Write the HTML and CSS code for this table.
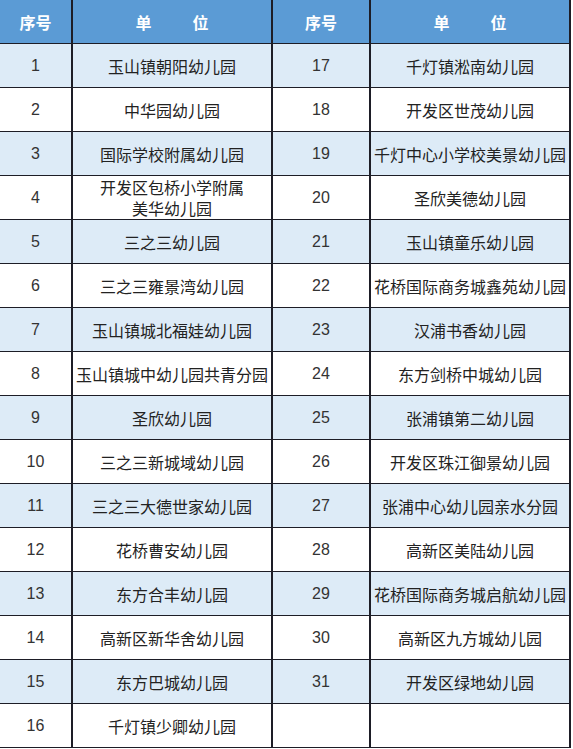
FILE: index.html
```html
<!DOCTYPE html>
<html lang="zh-CN">
<head>
<meta charset="utf-8">
<title>幼儿园名单</title>
<link rel="stylesheet" href="styles.css">
</head>
<body>
<table class="list">
  <colgroup>
    <col class="c-no"><col class="c-name"><col class="c-no2"><col class="c-name">
  </colgroup>
  <thead>
    <tr class="head">
      <th class="no">序号</th>
      <th><span class="h1">单</span><span>位</span></th>
      <th class="no">序号</th>
      <th><span class="h1">单</span><span>位</span></th>
    </tr>
  </thead>
  <tbody>
    <tr class="alt"><td class="num">1</td><td>玉山镇朝阳幼儿园</td><td class="num">17</td><td>千灯镇淞南幼儿园</td></tr>
    <tr><td class="num">2</td><td>中华园幼儿园</td><td class="num">18</td><td>开发区世茂幼儿园</td></tr>
    <tr class="alt"><td class="num">3</td><td>国际学校附属幼儿园</td><td class="num">19</td><td>千灯中心小学校美景幼儿园</td></tr>
    <tr><td class="num">4</td><td class="two"><div class="ln">开发区包桥小学附属</div><div class="ln">美华幼儿园</div></td><td class="num">20</td><td>圣欣美德幼儿园</td></tr>
    <tr class="alt"><td class="num">5</td><td>三之三幼儿园</td><td class="num">21</td><td>玉山镇童乐幼儿园</td></tr>
    <tr><td class="num">6</td><td>三之三雍景湾幼儿园</td><td class="num">22</td><td>花桥国际商务城鑫苑幼儿园</td></tr>
    <tr class="alt"><td class="num">7</td><td>玉山镇城北福娃幼儿园</td><td class="num">23</td><td>汉浦书香幼儿园</td></tr>
    <tr><td class="num">8</td><td>玉山镇城中幼儿园共青分园</td><td class="num">24</td><td>东方剑桥中城幼儿园</td></tr>
    <tr class="alt"><td class="num">9</td><td>圣欣幼儿园</td><td class="num">25</td><td>张浦镇第二幼儿园</td></tr>
    <tr><td class="num">10</td><td>三之三新城域幼儿园</td><td class="num">26</td><td>开发区珠江御景幼儿园</td></tr>
    <tr class="alt"><td class="num">11</td><td>三之三大德世家幼儿园</td><td class="num">27</td><td>张浦中心幼儿园亲水分园</td></tr>
    <tr><td class="num">12</td><td>花桥曹安幼儿园</td><td class="num">28</td><td>高新区美陆幼儿园</td></tr>
    <tr class="alt"><td class="num">13</td><td>东方合丰幼儿园</td><td class="num">29</td><td>花桥国际商务城启航幼儿园</td></tr>
    <tr><td class="num">14</td><td>高新区新华舍幼儿园</td><td class="num">30</td><td>高新区九方城幼儿园</td></tr>
    <tr class="alt"><td class="num">15</td><td>东方巴城幼儿园</td><td class="num">31</td><td>开发区绿地幼儿园</td></tr>
    <tr><td class="num">16</td><td>千灯镇少卿幼儿园</td><td class="num"></td><td></td></tr>
  </tbody>
</table>
</body>
</html>
```
FILE: styles.css
```css
html, body {
  margin: 0;
  padding: 0;
  background: #ffffff;
}

.list {
  border-collapse: collapse;
  table-layout: fixed;
  width: 571px;
  font-family: "Noto Sans CJK SC", "Noto Sans", sans-serif;
  font-size: 16px;
  color: #222222;
}

.c-no { width: 72px; }
.c-name { width: 200px; }
.c-no2 { width: 98px; }

.list th,
.list td {
  height: 43px;
  padding: 0;
  text-align: center;
  vertical-align: middle;
  white-space: nowrap;
  border-top: 1px solid #1d1d26;
  border-bottom: 1px solid #1d1d26;
  border-left: 2px solid #1d1d26;
  border-right: 2px solid #1d1d26;
  line-height: 20px;
}

.list tr > :first-child {
  border-left: none;
}

.head th {
  background: #5b9bd5;
  color: #ffffff;
  font-weight: 700;
  font-size: 16px;
  border-top: none;
}

.h1 {
  margin-right: 41px;
}

.alt td {
  background: #ddebf7;
}

.two .ln {
  line-height: 21px;
}

.num {
  font-family: "Liberation Sans", Arial, sans-serif;
  font-size: 16px;
  color: #333333;
}
```
